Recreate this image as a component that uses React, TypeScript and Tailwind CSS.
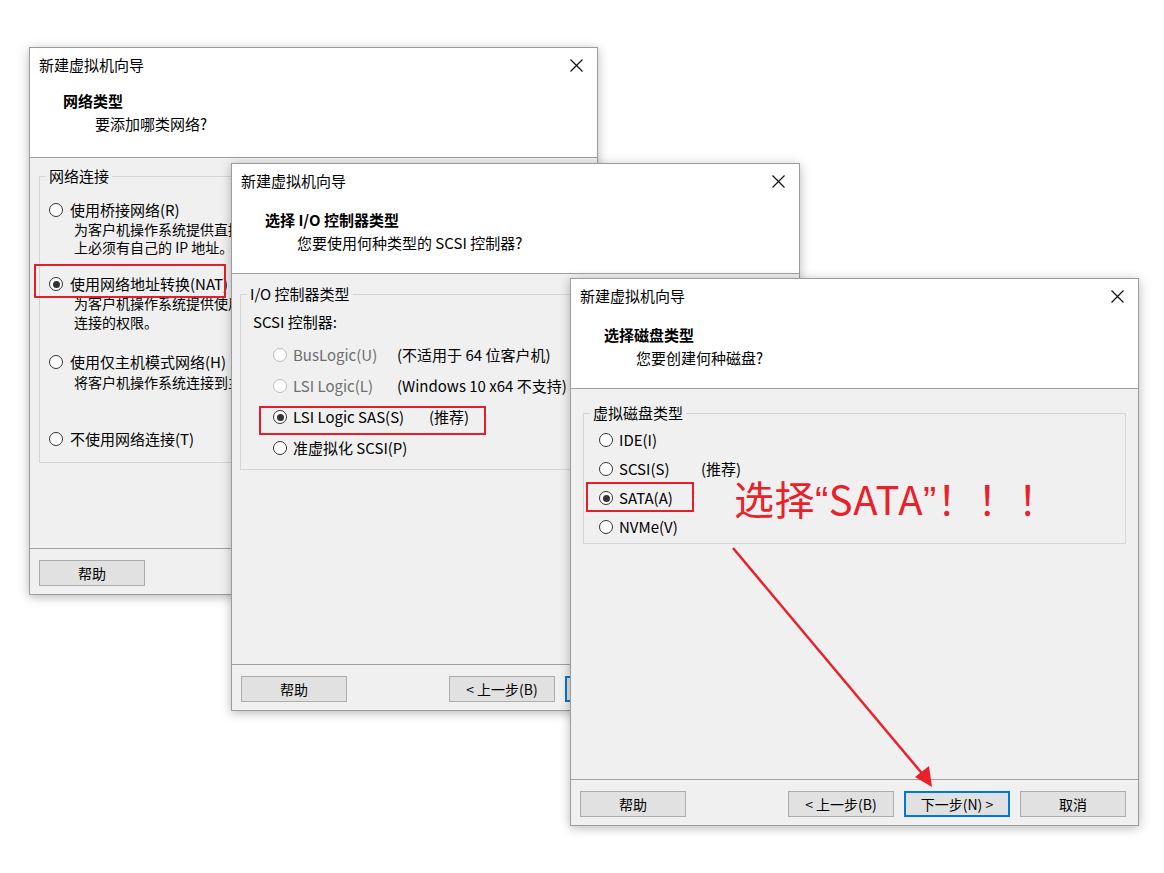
import type { ReactNode } from "react";

const FONT = '"Noto Sans CJK SC", "Microsoft YaHei", sans-serif';

function Radio({ checked, disabled }: { checked?: boolean; disabled?: boolean }) {
  return (
    <span
      className={`flex h-[14px] w-[14px] shrink-0 items-center justify-center rounded-full border bg-white ${
        disabled ? "border-[#bcbcbc]" : "border-[#333333]"
      }`}
    >
      {checked && <span className="h-[7px] w-[7px] rounded-full bg-[#333333]" />}
    </span>
  );
}

function Btn({ children, primary }: { children: ReactNode; primary?: boolean }) {
  return (
    <div
      className={`flex h-[26px] w-[106px] items-center justify-center bg-[#e1e1e1] text-[14px] text-black ${
        primary ? "border-2 border-[#0078d7]" : "border border-[#adadad]"
      }`}
    >
      {children}
    </div>
  );
}

function CloseIcon() {
  return (
    <svg width="13" height="13" viewBox="0 0 13 13">
      <path d="M0.5 0.5 L12.5 12.5 M12.5 0.5 L0.5 12.5" stroke="#111" strokeWidth="1.2" />
    </svg>
  );
}

function Wizard({
  className,
  heading,
  subtitle,
  children,
  footer,
  headTop = "pt-[11px]",
}: {
  className: string;
  heading: string;
  subtitle: string;
  children: ReactNode;
  footer: ReactNode;
  headTop?: string;
}) {
  return (
    <div
      className={`absolute flex h-[548px] w-[569px] flex-col border border-[#9c9c9c] bg-[#f0f0f0] shadow-[0_2px_10px_rgba(0,0,0,0.28)] ${className}`}
    >
      <div className="flex h-[34px] items-center justify-between bg-white pl-[9px] text-[15px] text-black">
        <span>新建虚拟机向导</span>
        <div className="flex w-[42px] items-center justify-center">
          <CloseIcon />
        </div>
      </div>
      <div className="h-[76px] border-b border-[#a0a0a0] bg-white">
        <div className={`pl-[33px] text-[15px] font-bold leading-[22px] text-black ${headTop}`}>{heading}</div>
        <div className="pl-[65px] pt-[1px] text-[15px] leading-[22px] text-black">{subtitle}</div>
      </div>
      <div className="relative flex-1">{children}</div>
      <div className="flex h-[46px] items-start border-t border-[#a0a0a0] pl-[9px] pr-[12px] pt-[11px]">
        {footer}
      </div>
    </div>
  );
}

function GroupBox({ label, className, children }: { label: string; className: string; children: ReactNode }) {
  return (
    <fieldset className={`border border-[#d5d5d5] ${className}`}>
      <legend className="ml-[6px] px-[3px] text-[15px] leading-[20px] text-black">{label}</legend>
      {children}
    </fieldset>
  );
}

function RedBox({ className }: { className: string }) {
  return <div className={`absolute border-2 border-[#e0202b] ${className}`} />;
}

function WizardButtons() {
  return (
    <div className="flex w-full">
      <Btn>帮助</Btn>
      <div className="ml-auto flex gap-[10px]">
        <Btn>&lt; 上一步(B)</Btn>
        <Btn primary>下一步(N) &gt;</Btn>
        <Btn>取消</Btn>
      </div>
    </div>
  );
}

export default function App() {
  return (
    <div className="relative h-[873px] w-[1164px] overflow-hidden bg-white text-black" style={{ fontFamily: FONT }}>
      {/* window 1: network type */}
      <Wizard
        className="left-[29px] top-[47px]"
        heading="网络类型"
        subtitle="要添加哪类网络?"
        headTop="pt-[8px]"
        footer={<Btn>帮助</Btn>}
      >
        <GroupBox label="网络连接" className="mx-[9px] mt-[8px] h-[297px]">
          <div className="mt-[14px] pl-[9px] text-[15px] leading-[20px]">
            <div className="flex items-center gap-[7px]">
              <Radio />
              <span>使用桥接网络(R)</span>
            </div>
            <div className="pl-[25px] text-[14px] leading-[18px]">
              为客户机操作系统提供直接访问外部以太网网络的权限。客户机在外部网络
            </div>
            <div className="pl-[25px] text-[14px] leading-[18px]">上必须有自己的 IP 地址。</div>

            <div className="mt-[18px] flex items-center gap-[7px]">
              <Radio checked />
              <span>使用网络地址转换(NAT)</span>
            </div>
            <div className="pl-[25px] text-[14px] leading-[19px]">
              为客户机操作系统提供使用主机 IP 地址访问主机拨号连接或外部以太网网络
            </div>
            <div className="pl-[25px] text-[14px] leading-[19px]">连接的权限。</div>

            <div className="mt-[20px] flex items-center gap-[7px]">
              <Radio />
              <span>使用仅主机模式网络(H)</span>
            </div>
            <div className="pl-[25px] text-[14px] leading-[20px]">将客户机操作系统连接到主机上的专用虚拟网络。</div>

            <div className="mt-[37px] flex items-center gap-[7px]">
              <Radio />
              <span>不使用网络连接(T)</span>
            </div>
          </div>
        </GroupBox>
        <RedBox className="left-[4px] top-[106px] h-[34px] w-[192px]" />
      </Wizard>

      {/* window 2: I/O controller */}
      <Wizard
        className="left-[231px] top-[163px]"
        heading="选择 I/O 控制器类型"
        subtitle="您要使用何种类型的 SCSI 控制器?"
        footer={<WizardButtons />}
      >
        <GroupBox label="I/O 控制器类型" className="ml-[8px] mr-[12px] mt-[10px] h-[186px]">
          <div className="pl-[12px] pt-[8px] text-[15px] leading-[20px]">SCSI 控制器:</div>
          <div className="mt-[13px] flex flex-col gap-[11px] pl-[32px] text-[15px] leading-[20px]">
            <div className="flex items-center">
              <Radio disabled />
              <span className="ml-[6px] w-[104px] text-[#6d6d6d]">BusLogic(U)</span>
              <span>(不适用于 64 位客户机)</span>
            </div>
            <div className="flex items-center">
              <Radio disabled />
              <span className="ml-[6px] w-[104px] text-[#6d6d6d]">LSI Logic(L)</span>
              <span>(Windows 10 x64 不支持)</span>
            </div>
            <div className="flex items-center">
              <Radio checked />
              <span className="ml-[6px] w-[136px]">LSI Logic SAS(S)</span>
              <span>(推荐)</span>
            </div>
            <div className="flex items-center">
              <Radio />
              <span className="ml-[6px]">准虚拟化 SCSI(P)</span>
            </div>
          </div>
        </GroupBox>
        <RedBox className="left-[27px] top-[132px] h-[29px] w-[227px]" />
      </Wizard>

      {/* window 3: disk type */}
      <Wizard
        className="left-[570px] top-[278px]"
        heading="选择磁盘类型"
        subtitle="您要创建何种磁盘?"
        footer={<WizardButtons />}
      >
        <GroupBox label="虚拟磁盘类型" className="mx-[12px] mt-[14px] h-[141px]">
          <div className="mt-[7px] flex flex-col gap-[9px] pl-[15px] text-[15px] leading-[20px]">
            <div className="flex items-center gap-[6px]">
              <Radio />
              <span>IDE(I)</span>
            </div>
            <div className="flex items-center gap-[6px]">
              <Radio />
              <span className="w-[76px]">SCSI(S)</span>
              <span>(推荐)</span>
            </div>
            <div className="flex items-center gap-[6px]">
              <Radio checked />
              <span>SATA(A)</span>
            </div>
            <div className="flex items-center gap-[6px]">
              <Radio />
              <span>NVMe(V)</span>
            </div>
          </div>
        </GroupBox>
        <RedBox className="left-[15px] top-[93px] h-[30px] w-[108px]" />
      </Wizard>

      {/* annotation */}
      <div className="absolute left-[734px] top-[475px] text-[40px] leading-[46px] tracking-[0.5px] text-[#e8212b]">
        选择<span style={{ fontFamily: '"Liberation Sans", sans-serif' }}>“</span>SATA
        <span style={{ fontFamily: '"Liberation Sans", sans-serif' }}>”</span>！！！
      </div>
      <svg className="pointer-events-none absolute left-0 top-0" width="1164" height="873">
        <line x1="733" y1="548" x2="925" y2="777" stroke="#e8212b" strokeWidth="2.5" />
        <polygon points="932,787 915,777 929,766" fill="#e8212b" />
      </svg>
    </div>
  );
}
